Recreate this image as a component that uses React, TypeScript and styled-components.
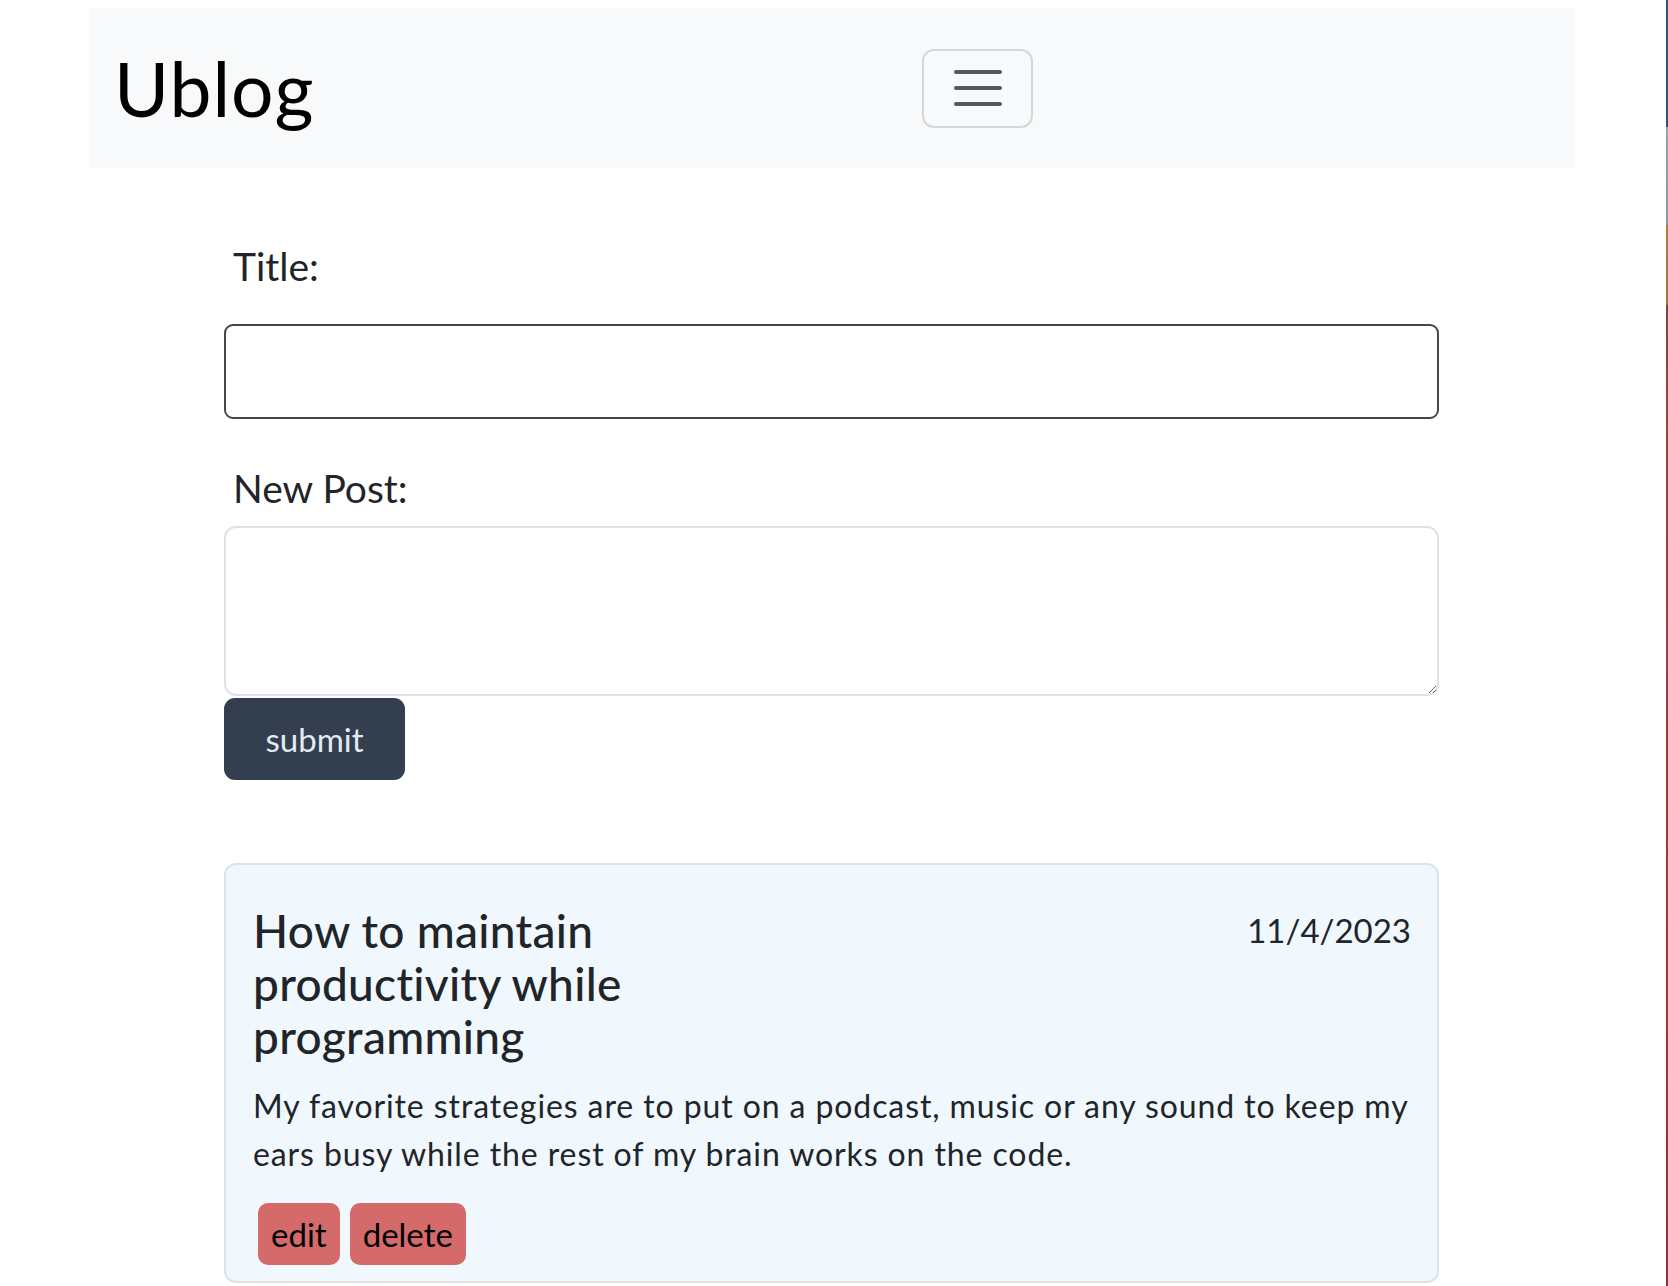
import React from "react";
import styled, { createGlobalStyle } from "styled-components";

const GlobalStyle = createGlobalStyle`
  html, body {
    margin: 0;
    padding: 0;
    background: #ffffff;
  }
  body {
    font-family: Lato, "Open Sans", Arial, sans-serif;
    color: #212529;
  }
  *, *::before, *::after {
    box-sizing: border-box;
  }
`;

const Shell = styled.div`
  display: flex;
  min-height: 1286px;
`;

const Page = styled.div`
  flex: 1;
  padding-top: 8px;
`;

const EdgeStrip = styled.div`
  flex: none;
  width: 2px;
  background: linear-gradient(
    to bottom,
    #2b5582 0px,
    #2b5582 127px,
    #9aa1b3 127px,
    #8e95a6 225px,
    #b47b36 225px,
    #a8742f 304px,
    #7a4a32 306px,
    #a4463a 420px,
    #a02a3a 1286px
  );
`;

const NavBar = styled.nav`
  width: 1486px;
  height: 160px;
  margin-left: 89px;
  background: #f8f9fa;
  display: grid;
  grid-template-columns: 833px 111px;
  align-items: center;
`;

const Brand = styled.a`
  padding-left: 25px;
  font-size: 75px;
  line-height: 1;
  letter-spacing: 1px;
  color: #000000;
  text-decoration: none;
  font-weight: 400;
`;

const Toggler = styled.button`
  width: 111px;
  height: 79px;
  padding: 0;
  border: 2px solid #d6d7d8;
  border-radius: 12px;
  background: transparent;
  display: flex;
  align-items: center;
  justify-content: center;
`;

const Main = styled.main`
  width: 1215px;
  margin-left: 224px;
`;

const Form = styled.form`
  display: flex;
  flex-direction: column;
  align-items: flex-start;
  padding-top: 68px;
`;

const Label = styled.label<{ $gap: number }>`
  display: block;
  margin-left: 9px;
  margin-bottom: ${(p) => p.$gap}px;
  font-size: 39px;
  line-height: 60px;
  color: #212529;
`;

const TitleInput = styled.input`
  width: 100%;
  height: 95px;
  margin-bottom: 39px;
  border: 2px solid #474747;
  border-radius: 9px;
  background: #ffffff;
  font-family: inherit;
  font-size: 32px;
  padding: 0 20px;
  outline: none;
`;

const PostArea = styled.textarea`
  display: block;
  width: 100%;
  height: 170px;
  border: 2px solid #dee2e6;
  border-radius: 12px;
  background: #ffffff;
  font-family: inherit;
  font-size: 32px;
  padding: 12px 20px;
  resize: vertical;
  outline: none;
`;

const SubmitButton = styled.button`
  margin-top: 2px;
  width: 181px;
  height: 82px;
  border: none;
  border-radius: 11px;
  background: #333f4f;
  color: #e1ebf0;
  font-family: inherit;
  font-size: 33px;
  padding: 0;
`;

const Card = styled.article`
  margin-top: 83px;
  border: 2px solid #dee2e6;
  border-radius: 12px;
  background: #f0f7fd;
  padding: 39px 26px 16px 27px;
`;

const CardHeader = styled.div`
  display: flex;
  justify-content: space-between;
  align-items: flex-start;
`;

const PostTitle = styled.h2`
  margin: 0;
  width: 480px;
  font-size: 46px;
  line-height: 53px;
  font-weight: 500;
  letter-spacing: 0.3px;
  color: #212529;
`;

const PostDate = styled.span`
  font-size: 33px;
  line-height: 53px;
  color: #212529;
`;

const PostBody = styled.p`
  margin: 19px 0 0;
  font-size: 32px;
  line-height: 48px;
  letter-spacing: 0.9px;
  color: #212529;
`;

const Actions = styled.div`
  display: flex;
  gap: 10px;
  margin-top: 25px;
  margin-left: 5px;
`;

const ActionButton = styled.button`
  height: 62px;
  padding: 0 13px;
  border: none;
  border-radius: 10px;
  background: #d56a6a;
  color: #000000;
  font-family: inherit;
  font-size: 33px;
`;

const MenuIcon = () => (
  <svg width="60" height="60" viewBox="0 0 30 30" aria-hidden="true">
    <path
      d="M4 7h22M4 15h22M4 23h22"
      stroke="rgba(33,37,41,0.75)"
      strokeWidth="2"
      strokeLinecap="round"
      fill="none"
    />
  </svg>
);

export default function App() {
  return (
    <>
      <GlobalStyle />
      <Shell>
        <Page>
          <NavBar>
            <Brand href="#">Ublog</Brand>
            <Toggler type="button" aria-label="Toggle navigation">
              <MenuIcon />
            </Toggler>
          </NavBar>
          <Main>
            <Form onSubmit={(e) => e.preventDefault()}>
              <Label htmlFor="title" $gap={28}>
                Title:
              </Label>
              <TitleInput id="title" type="text" />
              <Label htmlFor="post" $gap={8}>
                New Post:
              </Label>
              <PostArea id="post" />
              <SubmitButton type="submit">submit</SubmitButton>
            </Form>
            <Card>
              <CardHeader>
                <PostTitle>How to maintain productivity while programming</PostTitle>
                <PostDate>11/4/2023</PostDate>
              </CardHeader>
              <PostBody>
                My favorite strategies are to put on a podcast, music or any sound to keep my
                ears busy while the rest of my brain works on the code.
              </PostBody>
              <Actions>
                <ActionButton type="button">edit</ActionButton>
                <ActionButton type="button">delete</ActionButton>
              </Actions>
            </Card>
          </Main>
        </Page>
        <EdgeStrip />
      </Shell>
    </>
  );
}
